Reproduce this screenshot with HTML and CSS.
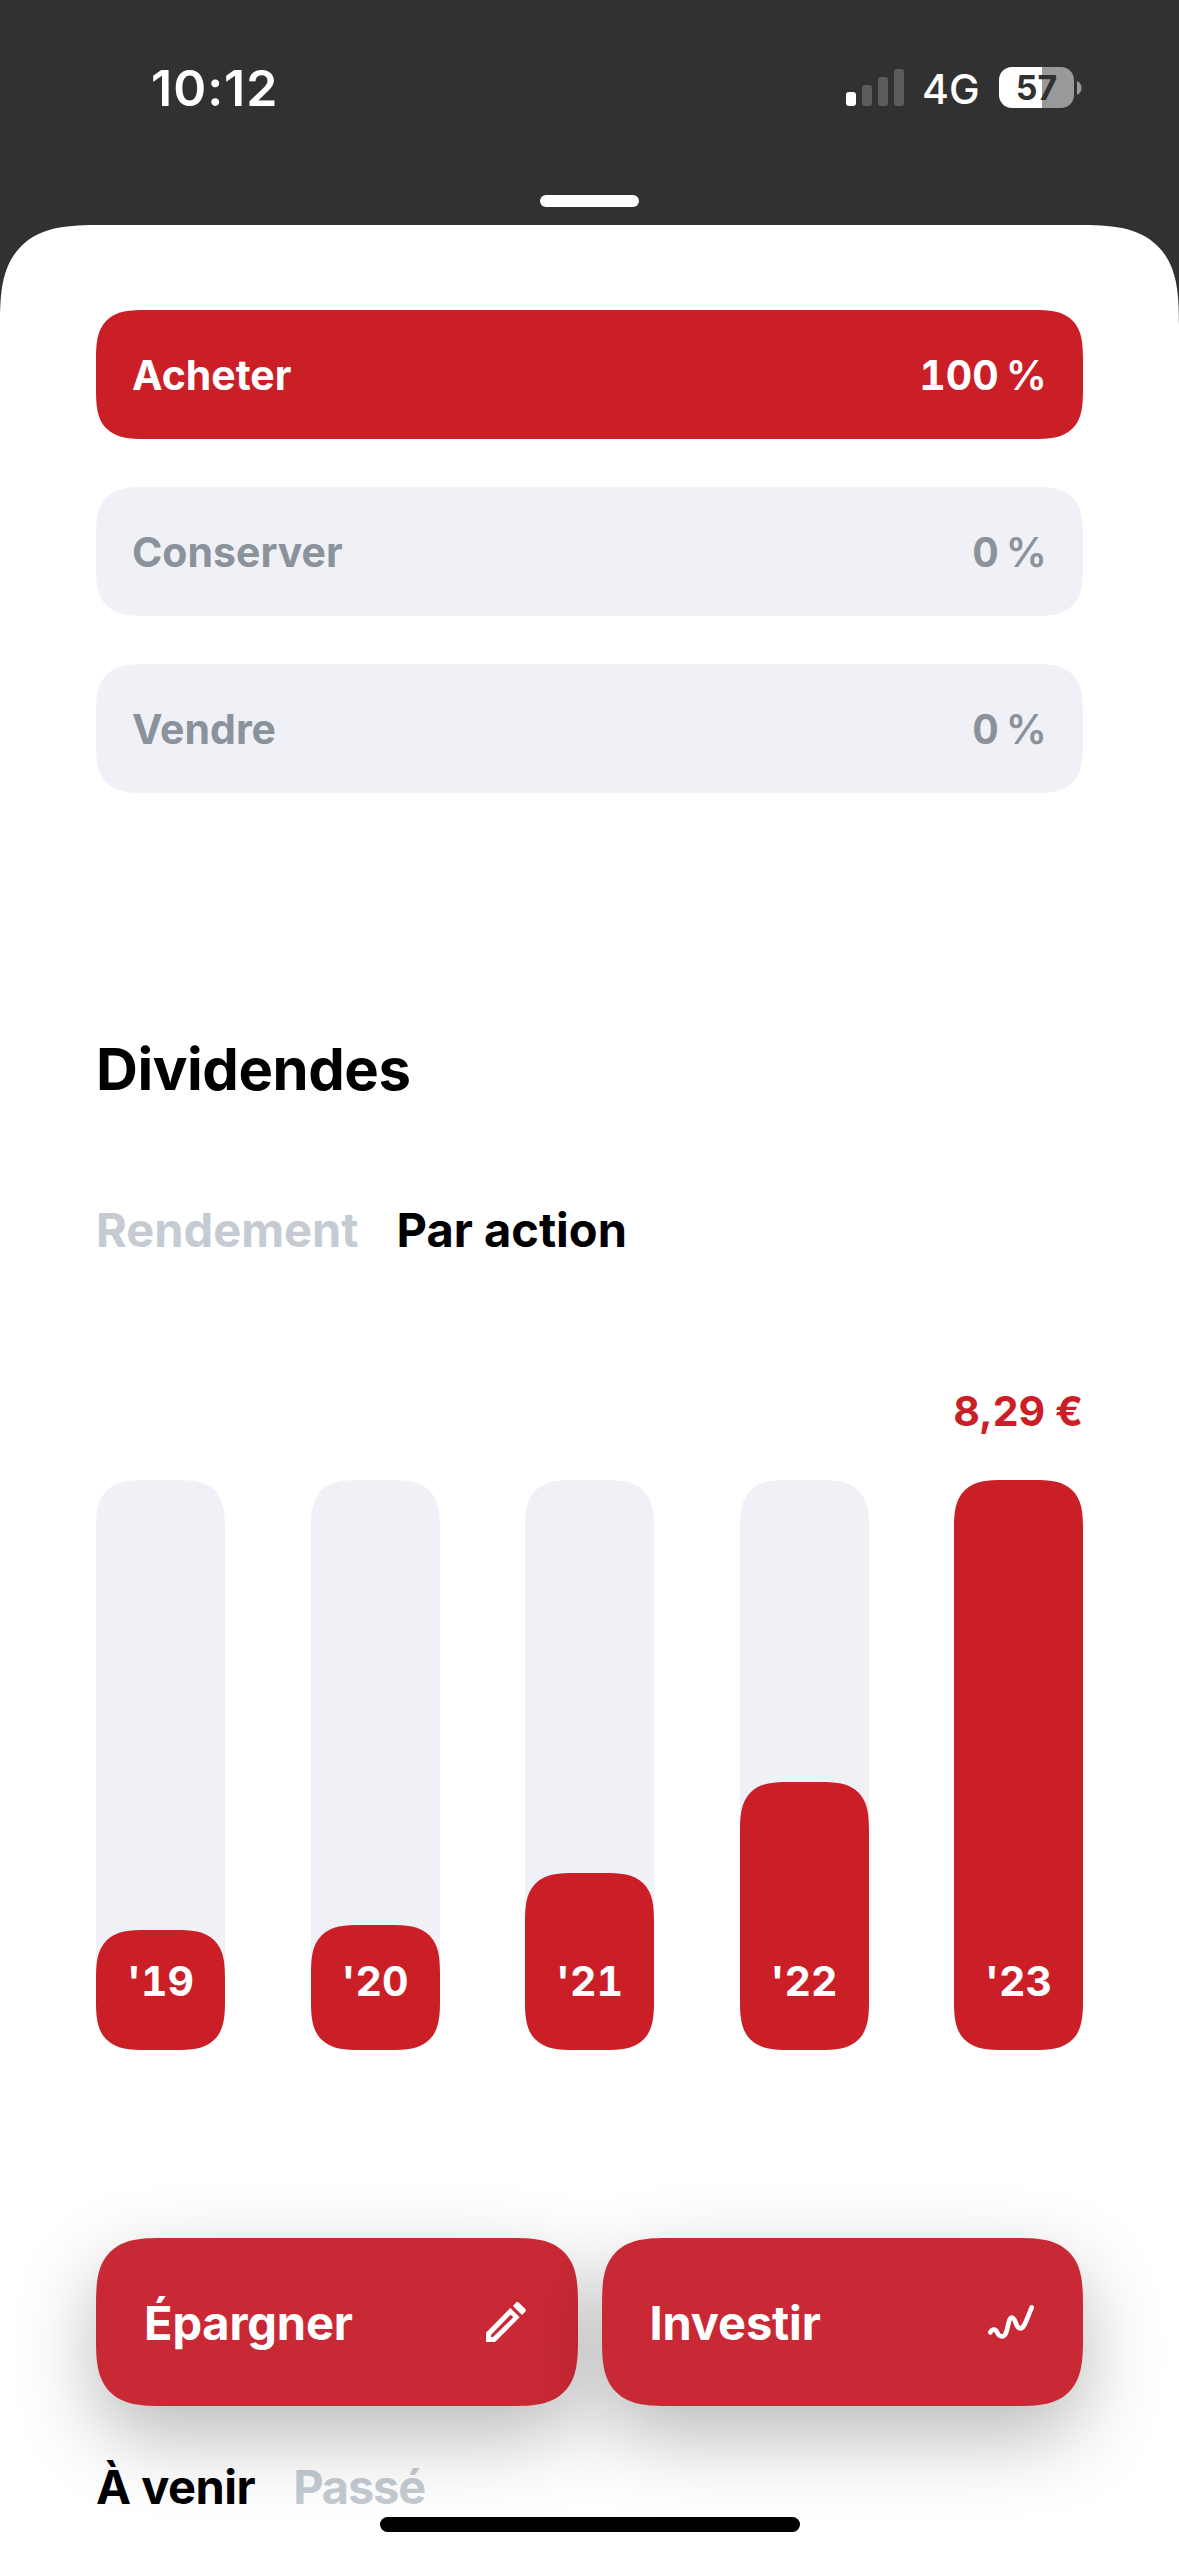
FILE: index.html
```html
<!DOCTYPE html>
<html lang="fr">
<head>
<meta charset="utf-8">
<title>Dividendes</title>
<link rel="stylesheet" href="styles.css">
</head>
<body>
<div class="screen">
  <header class="status">
    <span class="status-time">10:12</span>
    <div class="status-right">
      <svg class="signal" width="58" height="37" viewBox="0 0 58 37">
        <rect x="0" y="23" width="10" height="14" rx="3" fill="#fff"/>
        <rect x="16" y="16" width="10" height="21" rx="3" fill="#5c5c5c"/>
        <rect x="32" y="8" width="10" height="29" rx="3" fill="#5c5c5c"/>
        <rect x="48" y="0" width="10" height="37" rx="3" fill="#5c5c5c"/>
      </svg>
      <span class="network">4G</span>
      <div class="battery"><span class="battery-level">57</span></div>
      <svg class="battery-cap" width="5" height="14" viewBox="0 0 5 14"><path d="M0 0C3 1.500 4.500 4 4.500 7S3 12.500 0 14Z" fill="#999"/></svg>
    </div>
  </header>
  <div class="grabber"></div>
  <main class="sheet">
    <section class="ratings">
      <div class="rating rating-active"><span>Acheter</span><span class="pct"><b>100</b> %</span></div>
      <div class="rating"><span>Conserver</span><span class="pct"><b>0</b> %</span></div>
      <div class="rating"><span>Vendre</span><span class="pct"><b>0</b> %</span></div>
    </section>
    <h1 class="title">Dividendes</h1>
    <nav class="tabs">
      <span class="tab tab-off">Rendement</span>
      <span class="tab">Par action</span>
    </nav>
    <div class="amount">8,29 €</div>
    <section class="chart">
      <div class="bar"><div class="fill" style="height:120px">'19</div></div>
      <div class="bar"><div class="fill" style="height:125px">'20</div></div>
      <div class="bar"><div class="fill" style="height:177px">'21</div></div>
      <div class="bar"><div class="fill" style="height:268px">'22</div></div>
      <div class="bar"><div class="fill" style="height:570px">'23</div></div>
    </section>
    <nav class="tabs tabs-period">
      <span class="tab">À venir</span>
      <span class="tab tab-off">Passé</span>
    </nav>
  </main>
  <div class="actions">
    <button class="action"><span>Épargner</span>
      <svg width="60" height="60" viewBox="0 0 180 180">
        <path d="M30 122L103 48L131 76L57 150H30Z M45 129V135H51L112 76L104 68Z" fill="#fff" fill-rule="evenodd"/>
        <path d="M111 42L121 31Q125 28 129 32L148 51Q152 55 148 59L138 69Z" fill="#fff"/>
      </svg>
    </button>
    <button class="action"><span>Investir</span>
      <svg width="60" height="60" viewBox="0 0 180 180"><path d="M28 121C34 110 43 110 48 120C53 131 56 133 63 133C70 133 73 130 77 117C83 95 84 77 93 77C104 77 104 109 117 109C125 109 128 104 134 91L152 46" fill="none" stroke="#fff" stroke-width="14" stroke-linecap="round" stroke-linejoin="round"/></svg>
    </button>
  </div>
  <div class="home"></div>
</div>
</body>
</html>
```
FILE: styles.css
```css
* { box-sizing: border-box; }

body {
  margin: 0;
  background: #313131;
  font-family: Inter, "Liberation Sans", sans-serif;
}

.screen {
  position: relative;
  width: 1179px;
  height: 2556px;
  overflow: hidden;
  background: #313131;
}

.status {
  display: flex;
  justify-content: space-between;
  align-items: center;
  height: 175px;
  padding: 0 97px 0 151px;
}

.status-time {
  color: #fff;
  font-size: 50px;
  font-weight: 600;
  line-height: 60px;
  letter-spacing: 1px;
}

.status-right { display: flex; align-items: center; }
.signal { display: block; }

.network {
  width: 58px;
  margin: 2px 0 0 18px;
  color: #fff;
  font-size: 41px;
  font-weight: 500;
  line-height: 50px;
}

.battery {
  display: flex;
  justify-content: center;
  align-items: center;
  width: 75px;
  height: 41px;
  margin-left: 19px;
  border-radius: 13px;
  background: linear-gradient(90deg, #fff 43px, #999 43px);
}

.battery-level {
  color: #313131;
  font-size: 34px;
  font-weight: 700;
  line-height: 41px;
}

.battery-cap { display: block; margin-left: 3px; }

.grabber {
  width: 99px;
  height: 12px;
  margin: 20px auto 18px;
  border-radius: 6px;
  background: #fff;
}

.sheet {
  height: 2331px;
  padding: 85px 96px 0;
  border-radius: 72px 72px 0 0;
  background: #fff;
}

.ratings { display: flex; flex-direction: column; gap: 48px; }

.rating {
  display: flex;
  justify-content: space-between;
  align-items: center;
  height: 129px;
  padding: 0 36px;
  border-radius: 36px;
  background: #f0f1f7;
  color: #8a929c;
  font-size: 41px;
  font-weight: 700;
}

.rating-active { background: #cb1f27; color: #fff; }

.pct {
  font-weight: 600;
  font-variant-numeric: tabular-nums;
  word-spacing: -4px;
}

.pct b { font-weight: 700; }

.title {
  margin: 241px 0 0;
  color: #000;
  font-size: 58px;
  font-weight: 700;
  line-height: 70px;
  letter-spacing: -0.45px;
}

.tabs { display: flex; gap: 38px; margin-top: 98px; }

.tab {
  color: #000;
  font-size: 47px;
  font-weight: 700;
  line-height: 56px;
}

.tab-off { color: #c4cbd2; }

.amount {
  margin-top: 128px;
  color: #cb1f27;
  font-size: 41px;
  font-weight: 700;
  line-height: 50px;
  text-align: right;
}

.chart {
  display: flex;
  justify-content: space-between;
  margin-top: 44px;
}

.bar {
  display: flex;
  align-items: flex-end;
  width: 129px;
  height: 570px;
  border-radius: 36px;
  background: #f0f1f7;
}

.fill {
  display: flex;
  justify-content: center;
  align-items: flex-end;
  width: 129px;
  padding-bottom: 44px;
  border-radius: 36px;
  background: #cb1f27;
  color: #fff;
  font-size: 41px;
  font-weight: 700;
  line-height: 50px;
  font-variant-numeric: tabular-nums;
}

.tabs-period { margin-top: 409px; }
.tabs-period .tab { letter-spacing: -0.5px; }
.tabs-period .tab-off { letter-spacing: -1.2px; }

.actions {
  position: absolute;
  top: 2238px;
  left: 96px;
  display: flex;
  gap: 24px;
  width: 987px;
}

.action {
  display: flex;
  flex: 1;
  justify-content: space-between;
  align-items: center;
  height: 168px;
  padding: 0 42px 0 48px;
  border: 0;
  border-radius: 48px;
  background: #c92935;
  box-shadow: 0 30px 80px rgba(0, 0, 0, 0.28);
  color: #fff;
  font-family: inherit;
  font-size: 47px;
  font-weight: 700;
  letter-spacing: -0.15px;
}

.home {
  position: absolute;
  top: 2517px;
  left: 380px;
  width: 420px;
  height: 15px;
  border-radius: 8px;
  background: #000;
}

/* Continuous corners */
@supports (corner-shape: superellipse(1.5)) {
  .sheet { border-radius: 101px 101px 0 0; corner-shape: superellipse(1.56); }
  .rating, .bar, .fill { border-radius: 50px; corner-shape: superellipse(1.56); }
  .action { border-radius: 67px; corner-shape: superellipse(1.56); }
}
```
